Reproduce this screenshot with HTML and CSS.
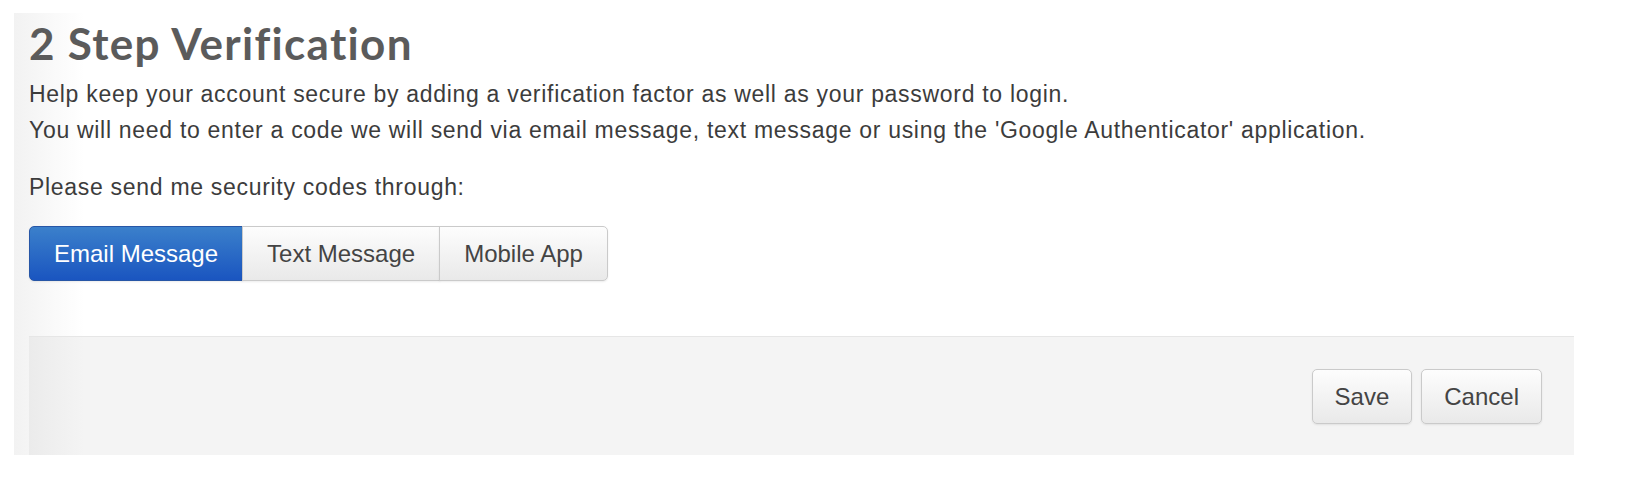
FILE: index.html
```html
<!DOCTYPE html>
<html lang="en">
<head>
    <meta charset="UTF-8">
    <meta name="viewport" content="width=device-width, initial-scale=1.0">
    <title>2 Step Verification</title>
    <link rel="stylesheet" href="styles.css">
</head>
<body>
    <div class="panel">
        <div class="panel-body">
            <h1>2 Step Verification</h1>
            <p class="intro">Help keep your account secure by adding a verification factor as well as your password to login.<br>
            You will need to enter a code we will send via email message, text message or using the 'Google Authenticator' application.</p>
            <p class="intro">Please send me security codes through:</p>

            <!-- delivery method -->
            <div class="btn-group">
                <button class="btn active" type="button">Email Message</button>
                <button class="btn" type="button">Text Message</button>
                <button class="btn" type="button">Mobile App</button>
            </div>
        </div>

        <div class="panel-footer">
            <button class="btn" type="submit">Save</button>
            <button class="btn" type="button">Cancel</button>
        </div>
    </div>
</body>
</html>
```

FILE: styles.css
```css
body {
    font-family: "Liberation Sans", Arial, sans-serif;
    background-color: #fff;
    margin: 0;
    color: #3c3c3c;
}

.panel {
    margin: 13px 0 0 14px;
    width: 1560px;
    background: linear-gradient(to right, #f2f2f2, #fff 70px);
}

.panel-body {
    padding: 4px 15px 55px;
}

h1 {
    font-family: Lato, "Open Sans", sans-serif;
    font-weight: 700;
    font-size: 44px;
    line-height: 52px;
    letter-spacing: 1.3px;
    color: #5b5b5b;
    margin: 0 0 7px;
}

.intro {
    font-size: 23px;
    line-height: 36px;
    letter-spacing: 0.7px;
    margin: 0 0 21px;
}

/* segmented buttons */
.btn-group {
    display: flex;
    margin-top: 18px;
}

.btn {
    font-family: "Liberation Sans", Arial, sans-serif;
    font-size: 24px;
    line-height: 25px;
    padding: 14px 24px;
    color: #444;
    background: linear-gradient(to bottom, #fdfdfd, #e9e9e9);
    border: 1px solid #cacaca;
    border-radius: 5px;
    box-shadow: 0 1px 2px rgba(0, 0, 0, 0.08);
    cursor: pointer;
}

.btn-group .btn {
    border-radius: 0;
    margin-left: -1px;
}

.btn-group .btn:first-child {
    border-radius: 5px 0 0 5px;
    margin-left: 0;
}

.btn-group .btn:last-child {
    border-radius: 0 5px 5px 0;
}

.btn.active {
    color: #fff;
    background: linear-gradient(to bottom, #3b80cb, #1a55c0);
    border-color: #2756a6;
}

.panel-footer {
    display: flex;
    justify-content: flex-end;
    gap: 9px;
    margin-left: 15px;
    padding: 32px 32px 31px;
    background: linear-gradient(to right, #ebebeb, #f4f4f4 55px);
    border-top: 1px solid #e6e6e6;
}

.panel-footer .btn {
    padding: 14px 22px;
}
```
